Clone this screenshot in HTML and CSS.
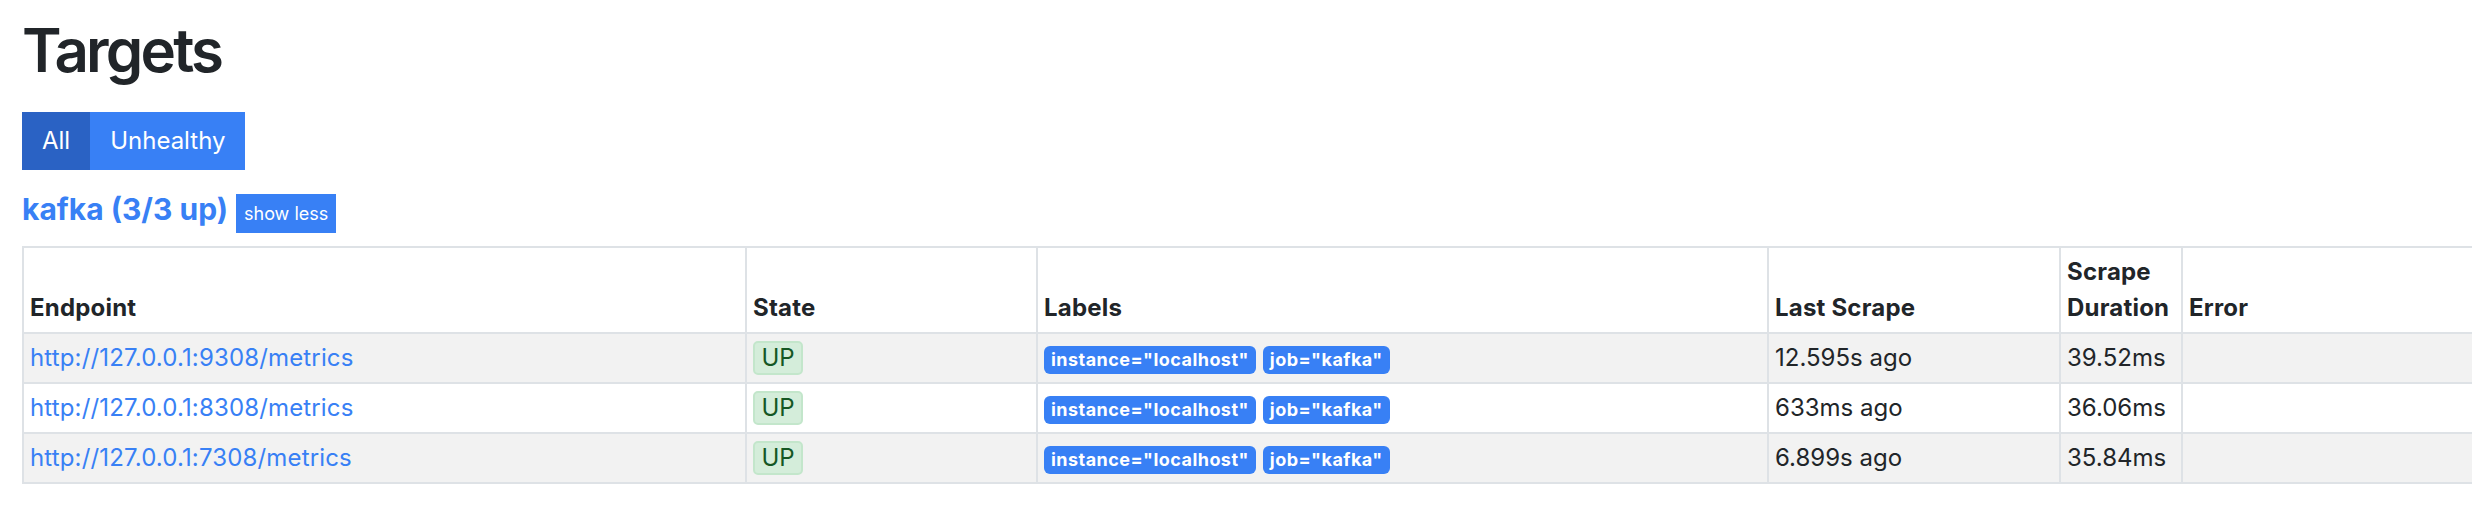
FILE: index.html
```html
<!DOCTYPE html>
<html lang="en">
<head>
<meta charset="utf-8">
<title>Targets</title>
<link rel="stylesheet" href="styles.css">
</head>
<body>
<div class="page">
  <h1 class="title">Targets</h1>
  <div class="btn-group">
    <button class="btn btn-active">All</button><button class="btn">Unhealthy</button>
  </div>
  <div class="pool-head">
    <a class="pool-title" href="#kafka">kafka (3/3 up)</a>
    <button class="btn-xs">show less</button>
  </div>
  <table class="targets">
    <colgroup>
      <col class="c-endpoint">
      <col class="c-state">
      <col class="c-labels">
      <col class="c-last">
      <col class="c-dur">
      <col class="c-error">
    </colgroup>
    <thead>
      <tr><th>Endpoint</th><th>State</th><th>Labels</th><th>Last Scrape</th><th>Scrape Duration</th><th>Error</th></tr>
    </thead>
    <tbody>
      <tr>
        <td><a class="endpoint" href="#">http://127.0.0.1:9308/metrics</a></td>
        <td><span class="state-up">UP</span></td>
        <td><span class="label">instance="localhost"</span><span class="label">job="kafka"</span></td>
        <td>12.595s ago</td>
        <td>39.52ms</td>
        <td></td>
      </tr>
      <tr>
        <td><a class="endpoint" href="#">http://127.0.0.1:8308/metrics</a></td>
        <td><span class="state-up">UP</span></td>
        <td><span class="label">instance="localhost"</span><span class="label">job="kafka"</span></td>
        <td>633ms ago</td>
        <td>36.06ms</td>
        <td></td>
      </tr>
      <tr>
        <td><a class="endpoint" href="#">http://127.0.0.1:7308/metrics</a></td>
        <td><span class="state-up">UP</span></td>
        <td><span class="label">instance="localhost"</span><span class="label">job="kafka"</span></td>
        <td>6.899s ago</td>
        <td>35.84ms</td>
        <td></td>
      </tr>
    </tbody>
  </table>
</div>
</body>
</html>
```
FILE: styles.css
```css
html, body {
  margin: 0;
  background: #fff;
}
body {
  font-family: Inter, "Noto Sans", "Liberation Sans", sans-serif;
  color: #212529;
  overflow-x: hidden;
}
.page {
  padding: 14px 22px 0 22px;
}
.title {
  margin: 0;
  font-size: 60px;
  font-weight: 600;
  line-height: 72px;
  letter-spacing: -2.8px;
}
.btn-group {
  display: flex;
  margin-top: 26px;
}
.btn {
  font-family: inherit;
  font-size: 24px;
  line-height: 36px;
  font-weight: 400;
  padding: 9px 18px;
  border: 2px solid #3880f5;
  background: #3880f5;
  color: #fff;
  border-radius: 0;
  margin: 0;
}
.btn-active {
  background: #2a62c4;
  border-color: #2a62c4;
}
.pool-head {
  display: flex;
  align-items: baseline;
  gap: 8px;
  margin-top: 17px;
}
.pool-title {
  font-size: 30px;
  line-height: 45px;
  font-weight: 700;
  color: #3880f5;
  text-decoration: none;
}
.btn-xs {
  font-family: inherit;
  font-size: 18px;
  line-height: 27px;
  padding: 6px 8px;
  border: 0;
  border-radius: 0;
  background: #3880f5;
  color: #fff;
}
.targets {
  margin-top: 13px;
  border-collapse: collapse;
  table-layout: fixed;
  width: 2892px;
  font-size: 24px;
  line-height: 36px;
}
.c-endpoint { width: 723px; }
.c-state { width: 291px; }
.c-labels { width: 731px; }
.c-last { width: 292px; }
.c-dur { width: 122px; }
.c-error { width: 733px; }
.targets th,
.targets td {
  border: 2px solid #dee2e6;
  padding: 6px;
  text-align: left;
}
.targets th {
  vertical-align: bottom;
  font-weight: 700;
  letter-spacing: 0.2px;
}
.targets td {
  vertical-align: top;
}
.targets tbody tr:nth-child(odd) {
  background: #f2f2f2;
}
.endpoint {
  color: #3880f5;
  text-decoration: none;
  letter-spacing: 0.15px;
}
.state-up {
  display: inline-block;
  line-height: 28px;
  padding: 1px 6.5px;
  border: 2px solid #c3e6cb;
  border-radius: 5px;
  background: #d4edda;
  color: #155724;
}
.label {
  display: inline-block;
  font-size: 18px;
  line-height: 18px;
  font-weight: 700;
  letter-spacing: 0.45px;
  padding: 5px 7px;
  margin-right: 7px;
  border-radius: 6px;
  background: #3880f5;
  color: #fff;
}
```
